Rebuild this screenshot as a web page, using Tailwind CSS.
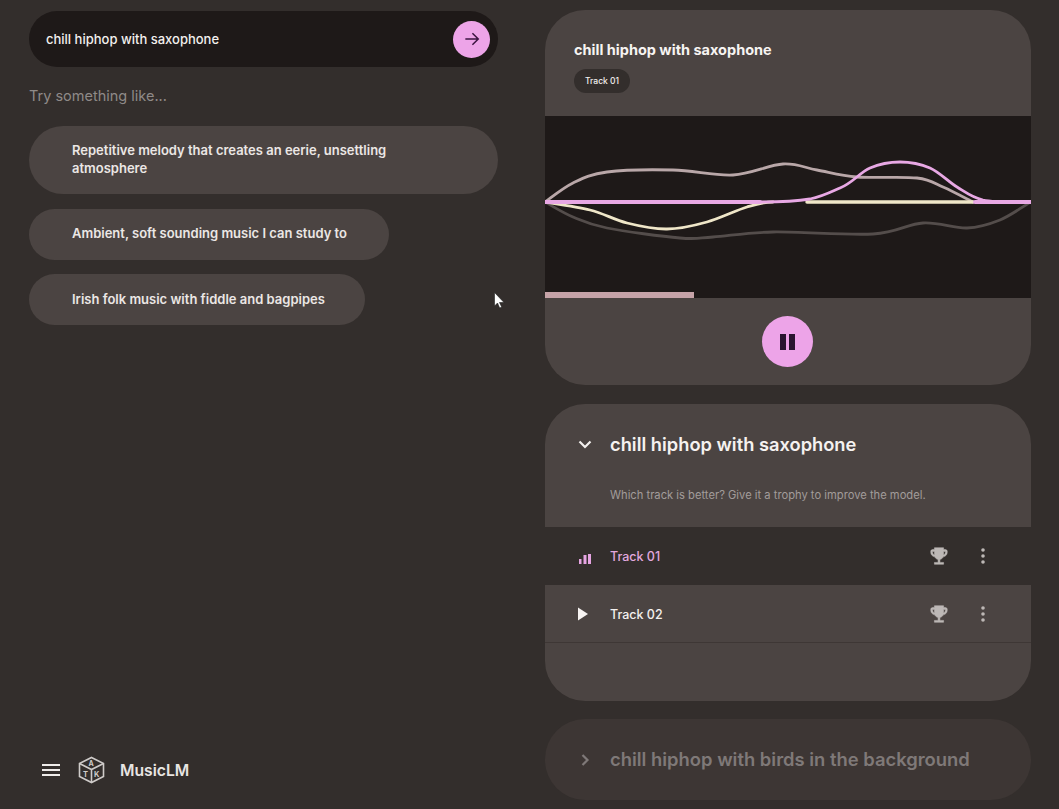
<!DOCTYPE html>
<html lang="en">
<head>
<meta charset="utf-8">
<title>MusicLM</title>
<script src="https://cdn.jsdelivr.net/npm/@tailwindcss/browser@4"></script>
</head>
<body class="m-0 bg-[#332e2c] font-['Inter','Liberation_Sans',sans-serif] text-[#f3f0ee]">
<div class="relative h-[809px] w-[1059px] overflow-hidden grid grid-cols-[545px_486px] items-start">

  <!-- Left column -->
  <div class="h-[809px] pl-[29px] pr-[47px] pt-[11px] flex flex-col">
    <div class="h-[56px] rounded-full bg-[#1e1918] pl-[17px] pr-[8px] flex items-center justify-between">
      <span class="pt-[1px] text-[13px] font-medium">chill hiphop with saxophone</span>
      <span class="w-[37px] h-[37px] rounded-full bg-[#eda4e8] flex items-center justify-center">
        <svg width="20" height="20" viewBox="0 0 24 24" fill="none" stroke="#3a1440" stroke-width="1.8"><path d="M4 12h15M12.5 5l7 7-7 7"/></svg>
      </span>
    </div>
    <p class="mt-[20px] h-[18px] leading-[18px] text-[14.5px] text-[#8f8a88]">Try something like...</p>
    <div class="mt-[21px] flex flex-col items-start">
      <div class="w-[469px] h-[68px] rounded-full bg-[#4b4442] pl-[43px] pr-[100px] pb-[2px] flex items-center text-[13px] leading-[18px] font-semibold text-[#ebe7e5]">Repetitive melody that creates an eerie, unsettling atmosphere</div>
      <div class="mt-[15px] w-[360px] h-[51px] rounded-full bg-[#4b4442] pl-[43px] pb-[1px] flex items-center text-[13px] font-semibold text-[#ebe7e5]">Ambient, soft sounding music I can study to</div>
      <div class="mt-[14px] w-[336px] h-[51px] rounded-full bg-[#4b4442] pl-[43px] flex items-center text-[13px] font-semibold text-[#ebe7e5]">Irish folk music with fiddle and bagpipes</div>
    </div>
    <div class="mt-auto mb-[25px] flex items-center pl-[13px]">
      <svg width="18" height="14" viewBox="0 0 18 14" fill="#efecea"><rect y="1" width="18" height="2"/><rect y="6" width="18" height="2"/><rect y="11" width="18" height="2"/></svg>
      <svg class="ml-[18px]" width="27" height="28" viewBox="0 0 27 28" fill="none" stroke="#cfcbc9" stroke-width="1.6">
        <path d="M13.5 1.5 25.5 7.5V20.5L13.5 26.5 1.5 20.5V7.5Z"/>
        <path d="M1.5 7.5 13.5 13.5 25.5 7.5M13.5 13.5V26.5"/>
        <text x="10.5" y="9.5" font-size="7" font-weight="700" fill="#cfcbc9" stroke="none">A</text>
        <text x="5" y="21" font-size="7.5" font-weight="700" fill="#cfcbc9" stroke="none">T</text>
        <text x="16" y="21" font-size="7.5" font-weight="700" fill="#cfcbc9" stroke="none">K</text>
      </svg>
      <span class="ml-[15px] pt-[1px] text-[15.7px] font-semibold text-[#e8e5e3]">MusicLM</span>
    </div>
  </div>

  <!-- Right column -->
  <div class="pt-[10px] flex flex-col">
    <section class="h-[375px] rounded-[40px] bg-[#4b4442] overflow-hidden flex flex-col">
      <div class="h-[106px] pl-[29px] pt-[31px]">
        <h2 class="text-[14.5px] leading-[18px] font-bold text-[#f7f4f2]">chill hiphop with saxophone</h2>
        <span class="mt-[10px] inline-flex h-[24px] items-center rounded-full bg-[#332e2c] px-[11px] text-[8.5px] font-medium">Track 01</span>
      </div>
      <div class="relative h-[182px] bg-[#1e1918]">
        <svg class="block" width="486" height="182" viewBox="0 0 486 182" fill="none" stroke-linecap="round" stroke-width="2.8">
          <path stroke="#544d4b" d="M0 86C4.7 88.5 17.7 96.7 28 101C38.3 105.3 44.2 108.5 62 112C79.8 115.5 117.3 120.5 135 122C152.7 123.5 152.5 122 168 121C183.5 120 201.3 116.5 228 116C254.7 115.5 303 119.5 328 118C353 116.5 362.3 108 378 107C393.7 106 409.2 112.5 422 112C434.8 111.5 444.3 108.3 455 104C465.7 99.7 480 89 486 86"/>
          <path stroke="#b9a7a8" d="M0 86C4.7 82.8 17.7 72 28 67C38.3 62 45.3 58.2 62 56C78.7 53.8 107 53.5 128 54C149 54.5 169.7 60 188 59C206.3 58 224 48.8 238 48C252 47.2 259.7 51.8 272 54C284.3 56.2 295.3 59.7 312 61C328.7 62.3 357.7 60.3 372 62C386.3 63.7 388.7 67 398 71C407.3 75 423 83.5 428 86"/>
          <path stroke="#efe6c8" d="M0 86C7.5 87.3 31.3 90.5 45 94C58.7 97.5 69.2 103.8 82 107C94.8 110.2 108.7 113.2 122 113C135.3 113 148.7 109.7 162 106C175.3 102.3 191 94.3 202 91C213 87.7 218 86 228 86"/>
          <path stroke="#e8a8e4" stroke-width="4" d="M0 86H215"/>
          <path stroke="#efe6c8" stroke-width="3.5" d="M262 86H428"/>
          <path stroke="#e8a8e4" d="M215 86C235 86 250 85.5 265 83C278 80.5 288 75 295 72C308 66.7 315 56.3 325 52C335 47.7 345 46 355 46C365 46 375 47.7 385 52C394.5 56.2 404 66.3 412 71C420 75.7 426 81 438 84C450 86.5 470 86 486 86"/>
          <path stroke="#e8a8e4" stroke-width="4" d="M430 86H486"/>
        </svg>
        <div class="absolute left-0 bottom-0 h-[6px] w-[149px] bg-[#c6a3a8]"></div>
      </div>
      <div class="flex-1 flex items-center justify-center pr-[2px]">
        <span class="w-[51px] h-[51px] rounded-full bg-[#eda4e8] flex items-center justify-center gap-[3px]">
          <i class="block w-[6px] h-[16px] bg-[#2a1530]"></i><i class="block w-[6px] h-[16px] bg-[#2a1530]"></i>
        </span>
      </div>
    </section>

    <section class="mt-[19px] h-[297px] rounded-[40px] bg-[#4b4442] overflow-hidden">
      <div class="h-[123px] relative">
        <div class="flex items-center pt-[28px] pl-[33px]">
          <svg width="14" height="14" viewBox="0 0 14 14" fill="none" stroke="#f3f0ee" stroke-width="2.2"><path d="M1.5 4.5 7 10l5.5-5.5"/></svg>
          <h3 class="ml-[18px] text-[18.3px] leading-[24px] font-semibold text-[#f5f2f0]">chill hiphop with saxophone</h3>
        </div>
        <p class="ml-[65px] mt-[32px] text-[11.2px] leading-[14px] text-[#a29c9a]">Which track is better? Give it a trophy to improve the model.</p>
      </div>
      <div class="h-[58px] bg-[#332e2c] flex items-center pl-[33px] pr-[46px]">
        <svg width="14" height="15" viewBox="0 0 14 15" fill="#e6a4e2"><rect x="1" y="10" width="2.5" height="5"/><rect x="5.5" y="6" width="3" height="9"/><rect x="10" y="5" width="3" height="10"/></svg>
        <span class="ml-[18px] pt-[2px] text-[12.5px] font-medium text-[#e2a8de]">Track 01</span>
        <svg class="ml-auto" width="22" height="22" viewBox="0 0 24 24" fill="#bdb8b6" stroke="#bdb8b6" stroke-width=".6"><path d="M19 5h-2V3H7v2H5c-1.1 0-2 .9-2 2v1c0 2.55 1.92 4.63 4.39 4.94.63 1.5 1.98 2.63 3.61 2.96V19H7v2h10v-2h-4v-3.1c1.63-.33 2.98-1.46 3.61-2.96C19.08 12.63 21 10.55 21 8V7c0-1.1-.9-2-2-2zM5 8V7h2v3.82C5.84 10.4 5 9.3 5 8zm14 0c0 1.3-.84 2.4-2 2.82V7h2v1z"/></svg>
        <svg class="ml-[31px]" width="4" height="16" viewBox="0 0 4 16" fill="#bdb8b6"><circle cx="2" cy="2" r="1.8"/><circle cx="2" cy="8" r="1.8"/><circle cx="2" cy="14" r="1.8"/></svg>
      </div>
      <div class="h-[58px] border-b border-[#3e3735] flex items-center pl-[33px] pr-[46px]">
        <svg width="14" height="14" viewBox="0 0 14 14" fill="#f7f4f2"><path d="M0 .5 10 7 0 13.5Z"/></svg>
        <span class="ml-[18px] pt-[3px] text-[12.5px] font-medium text-[#f3f0ee]">Track 02</span>
        <svg class="ml-auto" width="22" height="22" viewBox="0 0 24 24" fill="#bdb8b6" stroke="#bdb8b6" stroke-width=".6"><path d="M19 5h-2V3H7v2H5c-1.1 0-2 .9-2 2v1c0 2.55 1.92 4.63 4.39 4.94.63 1.5 1.98 2.63 3.61 2.96V19H7v2h10v-2h-4v-3.1c1.63-.33 2.98-1.46 3.61-2.96C19.08 12.63 21 10.55 21 8V7c0-1.1-.9-2-2-2zM5 8V7h2v3.82C5.84 10.4 5 9.3 5 8zm14 0c0 1.3-.84 2.4-2 2.82V7h2v1z"/></svg>
        <svg class="ml-[31px]" width="4" height="16" viewBox="0 0 4 16" fill="#bdb8b6"><circle cx="2" cy="2" r="1.8"/><circle cx="2" cy="8" r="1.8"/><circle cx="2" cy="14" r="1.8"/></svg>
      </div>
    </section>

    <section class="mt-[18px] h-[81px] rounded-[40px] bg-[#3d3634] flex items-center pl-[33px]">
      <svg width="14" height="14" viewBox="0 0 14 14" fill="none" stroke="#7f7978" stroke-width="2.2"><path d="M4.5 2 9.5 7l-5 5"/></svg>
      <h3 class="ml-[18px] text-[18.4px] font-semibold text-[#7f7978]">chill hiphop with birds in the background</h3>
    </section>
  </div>

  <!-- Mouse pointer -->
  <svg class="absolute left-[494px] top-[292px]" width="12" height="18" viewBox="0 0 12 18" fill="#fff" stroke="#222" stroke-width=".6"><path d="M.5.5V14l3-3 2.2 5 2-.9L5.5 10.5H10Z"/></svg>
</div>
</body>
</html>
